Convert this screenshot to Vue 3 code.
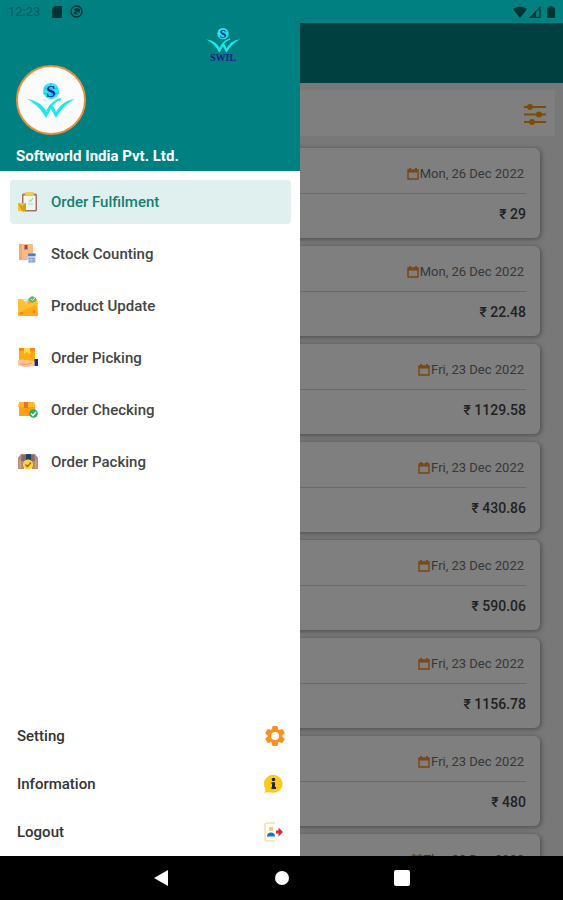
<template>
  <div class="screen">
    <!-- Shared logo mark -->
    <svg class="sprite" aria-hidden="true">
      <symbol id="logo-mark" viewBox="0 0 48 36">
        <circle cx="24" cy="9" r="8" fill="#2ee6f5" />
        <path d="M17 6q7 3 14 0M16 11q8 3 16 0M24 1v16" stroke="#14b8dc" stroke-width=".7" fill="none" />
        <path d="M0 17C9 18 16 23 20 30L24 22C21 19 18 18 15 17C22 18 27 24 29 30C33 23 39 18 48 17C40 21 34 27 29 36L24 27L19 36C14 27 8 21 0 17Z" fill="#1fe5ec" />
        <path d="M34 17C28 18 24 22 20 29" stroke="#1fe5ec" stroke-width="2" fill="none" />
      </symbol>
    </svg>

    <!-- Status Bar -->
    <header class="status-bar">
      <span class="clock">12:23</span>
      <svg width="10" height="12" viewBox="0 0 10 12"><path d="M3 0h6q1 0 1 1v10q0 1-1 1H1q-1 0-1-1V3z" fill="#033" /></svg>
      <svg width="13" height="13" viewBox="0 0 13 13">
        <circle cx="6.5" cy="6.5" r="5.5" fill="none" stroke="#033" stroke-width="1.4" />
        <path d="M4 4.5 6 3l4 1v4L8 6.500l-1.500 1L8 9.500H5L3.500 7.500l2-1z" fill="#033" />
      </svg>
      <div class="signals">
        <svg width="14" height="12" viewBox="0 0 14 12"><path d="M0 3Q7-2 14 3L7 12z" fill="#033" /></svg>
        <svg width="12" height="12" viewBox="0 0 12 12">
          <path d="M1.500 11.300H11V1.500z" fill="none" stroke="#033" stroke-width="1.200" />
          <path d="M0 12 7 5v7z" fill="#033" />
        </svg>
        <svg width="12" height="12" viewBox="0 0 12 12"><path d="M6.500 0h3v1.500H11q1 0 1 1V11q0 1-1 1H5q-1 0-1-1V2.500q0-1 1-1h1.500z" fill="#033" /></svg>
      </div>
    </header>

    <div class="stage">
      <!-- Order List -->
      <main class="orders">
        <div class="toolbar"></div>
        <div class="filter-bar">
          <button type="button" class="filter-btn" aria-label="Filter">
            <svg width="24" height="22" viewBox="0 0 24 22" fill="#ff9505">
              <path d="M1 3h22M1 10.500h22M1 18h22" stroke="#ff9505" stroke-width="1.800" />
              <circle cx="7" cy="3" r="3" />
              <circle cx="16" cy="10.500" r="3" />
              <circle cx="9" cy="18" r="3" />
            </svg>
          </button>
        </div>
        <div class="cards">
          <article v-for="(order, i) in orders" :key="i" class="card">
            <div class="card-date">
              <svg width="12" height="12" viewBox="0 0 12 12">
                <path d="M1 2h10v9H1z" fill="none" stroke="#f58a1f" stroke-width="1.400" />
                <path d="M1 3.500h10M3 0v2M9 0v2" stroke="#f58a1f" stroke-width="1.800" />
              </svg>
              <span>{{ order.date }}</span>
            </div>
            <div v-if="order.amount" class="card-amount">₹ {{ order.amount }}</div>
          </article>
        </div>
      </main>

      <div class="scrim"></div>

      <!-- Drawer -->
      <aside class="drawer">
        <div class="profile">
          <div class="brand">
            <svg width="34" height="26" viewBox="0 0 48 36">
              <use href="#logo-mark" />
              <text x="24" y="15" class="logo-letter">S</text>
            </svg>
            <span>SWIL</span>
          </div>
          <div class="avatar">
            <svg width="48" height="36" viewBox="0 0 48 36">
              <use href="#logo-mark" />
              <text x="24" y="15" class="logo-letter">S</text>
            </svg>
          </div>
          <h1 class="company">Softworld India Pvt. Ltd.</h1>
        </div>

        <nav class="menu">
          <a
            v-for="item in menu"
            :key="item.icon"
            href="#"
            class="menu-item"
            :class="{ active: item.icon === current }"
            @click.prevent="current = item.icon"
          >
            <svg width="20" height="20" viewBox="0 0 20 20">
              <g v-if="item.icon === 'fulfilment'">
                <rect x="4" y="1.500" width="15" height="18" rx="1.500" fill="#a9706b" />
                <rect x="5.500" y="3.500" width="12" height="14.500" fill="#f0f6f0" />
                <rect x="7" y="0" width="9" height="3.500" rx="1" fill="#f0cd50" />
                <path d="m11 8 1.500 1.500L15 6M10 12h5" stroke="#a2d8b4" stroke-width="1.200" fill="none" />
                <path d="M0 11h8v8H0z" fill="#f0c42c" />
                <path d="m0 11 4 3 4-3v8H4z" fill="#d2a21c" />
              </g>
              <g v-else-if="item.icon === 'counting'">
                <rect x="1" y="0" width="14" height="16" rx="1" fill="#fbb98a" />
                <path d="M1 0h3v16H1z" fill="#f7a775" />
                <path d="M6.500 1h3v5L8 5 6.500 6z" fill="#8c4a3c" />
                <rect x="10" y="9" width="7.500" height="10" rx="1" fill="#b4cdee" />
                <path d="M10 9.500h7.500V12H10z" fill="#4283c4" />
                <path d="M11 14.500h1.500m1 0H15M11 17h1.500m1 0H15" stroke="#5b84bb" stroke-width="1.200" />
                <path d="M16 14v4" stroke="#e66f9d" stroke-width="1.400" />
              </g>
              <g v-else-if="item.icon === 'update'">
                <path d="M0 3h19l1 16q0 1-1 1H1q-1 0-1-1z" fill="#ffa91f" />
                <path d="M0 3h7l4 5 5-4h3l1 4-20 9z" fill="#ffc132" />
                <path d="M4 3h8L8 7z" fill="#dbe6dd" />
                <path d="m10 3 4-3 4 2v3l-4 2-3-2z" fill="#65b66a" />
                <path d="m13 3 1.500 1.500L17 2" stroke="#e6f6dc" fill="none" />
                <path d="M2 17h3M16 14v3" stroke="#d96b12" stroke-width="1.200" />
              </g>
              <g v-else-if="item.icon === 'picking'">
                <path d="M1 0h16v14H1z" fill="#ffab12" />
                <path d="M1 0h16v3H1z" fill="#fb8614" />
                <path d="M6 0h6v6L9 4 6 6z" fill="#ffdc4b" />
                <path d="M0 12q4-1 7 0l9 1v5l-8 1q-5 0-8-2z" fill="#ffc496" />
                <path d="M2 16q6 2 12-1" stroke="#f09a66" fill="none" />
                <path d="M16.500 11H20v7h-3.500z" fill="#182a83" />
              </g>
              <g v-else-if="item.icon === 'checking'">
                <path d="M1 2h15l1 4v10H1z" fill="#ffa018" />
                <path d="m1 2-1 5h17l-1-5z" fill="#ffb82b" />
                <path d="M6 2h4v6H6z" fill="#ed7219" />
                <circle cx="15.500" cy="13.500" r="4.300" fill="#27ad62" />
                <path d="m13 13.500 2 2 3-3.500" stroke="#fff" stroke-width="1.400" fill="none" />
              </g>
              <g v-else>
                <path d="M3 2h14l3 4v11h-6V8H6v9H0V6z" fill="#b98971" />
                <path d="M4 3h4v6H3zM12 3h4l1 6h-5z" fill="#776d78" />
                <path d="M8 2h5v6H8z" fill="#243e67" />
                <path d="M2 8v8M18 8v8" stroke="#d5a184" stroke-width="1.500" />
                <circle cx="10" cy="12.500" r="5" fill="#ffd23c" />
                <path d="m7.500 12.500 2 2 3.500-4" stroke="#8a691a" stroke-width="1.200" fill="none" />
              </g>
            </svg>
            <span>{{ item.label }}</span>
          </a>
        </nav>

        <nav class="footer-menu">
          <a href="#" class="footer-item">
            <span>Setting</span>
            <svg width="22" height="22" viewBox="0 0 22 22">
              <g fill="#fb9120">
                <rect v-for="n in 3" :key="n" x="8" y="1" width="6" height="20" rx="1.500" :transform="`rotate(${n * 60} 11 11)`" />
                <circle cx="11" cy="11" r="7.500" />
              </g>
              <circle cx="11" cy="11" r="4" fill="#fff" />
            </svg>
          </a>
          <a href="#" class="footer-item">
            <span>Information</span>
            <svg width="22" height="22" viewBox="0 0 22 22">
              <path d="M0 20q2-2 1-5a9.300 9 0 1 1 6 4.500Q3 19 0 20z" fill="#fdca1c" />
              <circle cx="9.500" cy="6.500" r="1.800" fill="#22203c" />
              <path d="M7.500 9.300H11V14h1v2H7.500V14H8v-3h-.5z" fill="#22203c" />
            </svg>
          </a>
          <a href="#" class="footer-item">
            <span>Logout</span>
            <svg width="22" height="22" viewBox="0 0 22 22">
              <path d="M10 3V2H3Q1 2 1 4v14q0 2 2 2h7v-1" stroke="#f3dfa8" stroke-width="1.500" fill="none" />
              <circle cx="7" cy="8" r="2.200" fill="#f6ce72" />
              <path d="M3 15.500q0-4 4-4t4 4z" fill="#1675c4" />
              <path d="M12 9.500h2.500V6.500L19 11l-4.500 4.500v-3H12z" fill="#dc2436" />
            </svg>
          </a>
        </nav>
      </aside>
    </div>

    <!-- System Navigation -->
    <footer class="system-nav">
      <button type="button" aria-label="Back">
        <svg width="16" height="16" viewBox="0 0 16 16"><path d="M0 8 14 0v16z" fill="#fff" /></svg>
      </button>
      <button type="button" aria-label="Home">
        <svg width="16" height="16" viewBox="0 0 16 16"><circle cx="8" cy="8" r="7" fill="#fff" /></svg>
      </button>
      <button type="button" aria-label="Recent apps">
        <svg width="16" height="16" viewBox="0 0 16 16"><rect width="16" height="16" rx="2" fill="#fff" /></svg>
      </button>
    </footer>
  </div>
</template>

<script setup>
import { ref } from 'vue';

const current = ref('fulfilment');

const menu = [
  { icon: 'fulfilment', label: 'Order Fulfilment' },
  { icon: 'counting', label: 'Stock Counting' },
  { icon: 'update', label: 'Product Update' },
  { icon: 'picking', label: 'Order Picking' },
  { icon: 'checking', label: 'Order Checking' },
  { icon: 'packing', label: 'Order Packing' }
];

const orders = [
  { date: 'Mon, 26 Dec 2022', amount: '29' },
  { date: 'Mon, 26 Dec 2022', amount: '22.48' },
  { date: 'Fri, 23 Dec 2022', amount: '1129.58' },
  { date: 'Fri, 23 Dec 2022', amount: '430.86' },
  { date: 'Fri, 23 Dec 2022', amount: '590.06' },
  { date: 'Fri, 23 Dec 2022', amount: '1156.78' },
  { date: 'Fri, 23 Dec 2022', amount: '480' },
  { date: 'Thu, 22 Dec 2022' }
];
</script>

<style>
body {
  margin: 0;
}
</style>

<style scoped>
.screen {
  display: flex;
  flex-direction: column;
  height: 100vh;
  overflow: hidden;
  font-family: Roboto, "Noto Sans", sans-serif;
  font-size: 14px;
  color: #333;
}

.screen * {
  box-sizing: border-box;
}

svg {
  display: block;
  flex: none;
}

.sprite {
  position: absolute;
  width: 0;
  height: 0;
}

.status-bar {
  display: flex;
  align-items: center;
  gap: 8px;
  flex: none;
  height: 23px;
  padding: 0 8px;
  background: #008080;
  color: #045a5a;
  font-size: 13px;
}

.clock {
  margin-right: 4px;
}

.signals {
  display: flex;
  gap: 2px;
  margin-left: auto;
}

.stage {
  position: relative;
  flex: 1;
  min-height: 0;
  overflow: hidden;
}

.orders {
  background: #f0f0f0;
}

.toolbar {
  height: 60px;
  background: #008080;
}

.filter-bar {
  display: flex;
  align-items: center;
  justify-content: flex-end;
  height: 46px;
  margin: 7px 8px 12px;
  padding: 4px 8px 0;
  background: #fff;
}

.filter-btn {
  padding: 0;
  border: 0;
  background: none;
}

.cards {
  display: flex;
  flex-direction: column;
  gap: 8px;
  padding: 0 23px;
}

.card {
  min-height: 90px;
  padding: 6px 14px 4px;
  border-radius: 6px;
  background: #fff;
  box-shadow: 1px 1px 5px rgba(0, 0, 0, 0.4);
}

.card-date {
  display: flex;
  align-items: center;
  justify-content: flex-end;
  gap: 1px;
  height: 40px;
  padding-right: 2px;
  border-bottom: 1px solid #d4d4d4;
  font-size: 13px;
  color: #707070;
}

.card-amount {
  height: 40px;
  line-height: 40px;
  text-align: right;
  font-size: 14px;
  font-weight: 500;
  color: #444;
}

.scrim {
  position: absolute;
  inset: 0;
  background: rgba(0, 0, 0, 0.5);
}

.drawer {
  position: absolute;
  top: 0;
  bottom: 0;
  left: 0;
  display: flex;
  flex-direction: column;
  width: 300px;
  max-width: 85%;
  background: #fff;
}

.profile {
  position: relative;
  padding: 42px 16px 5px;
  background: #008080;
}

.brand {
  position: absolute;
  top: 4px;
  right: 60px;
  display: flex;
  flex-direction: column;
  align-items: center;
  font: 700 10px/10px "Liberation Serif", serif;
  color: #151a8c;
}

.logo-letter {
  font: 700 17px "Liberation Serif", serif;
  text-anchor: middle;
  fill: #102a90;
}

.avatar {
  display: flex;
  align-items: center;
  justify-content: center;
  width: 70px;
  height: 70px;
  border: 2px solid #e8913a;
  border-radius: 50%;
  background: #fcfcfc;
}

.company {
  margin: 11px 0 0;
  font-size: 15px;
  line-height: 20px;
  font-weight: 700;
  color: #fff;
}

.menu {
  display: flex;
  flex-direction: column;
  gap: 8px;
  padding: 9px 9px 0 10px;
}

.menu-item {
  display: flex;
  align-items: center;
  gap: 13px;
  height: 44px;
  padding: 0 8px;
  border-radius: 4px;
  font-size: 15px;
  font-weight: 500;
  color: #444;
  text-decoration: none;
}

.menu-item.active {
  background: #e0f0ee;
  color: #138072;
}

.footer-menu {
  margin-top: auto;
}

.footer-item {
  display: flex;
  align-items: center;
  justify-content: space-between;
  height: 48px;
  padding: 0 14px 0 17px;
  font-size: 15px;
  font-weight: 500;
  color: #333;
  text-decoration: none;
}

.system-nav {
  display: flex;
  align-items: center;
  justify-content: center;
  gap: 104px;
  flex: none;
  height: 44px;
  background: #000;
}

.system-nav button {
  padding: 0;
  border: 0;
  background: none;
}
</style>
